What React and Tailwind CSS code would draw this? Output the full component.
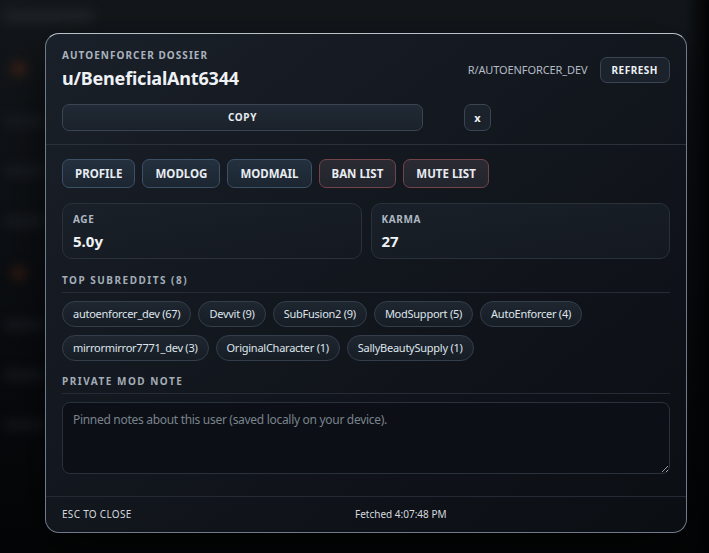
import React from "react";

const font = { fontFamily: '"Noto Sans", "Open Sans", sans-serif' };

function NavBtn({ children, danger }) {
  return (
    <button
      className={
        danger
          ? "h-[29px] px-[12px] rounded-[7px] border border-[#74434a] bg-gradient-to-b from-[#2b2a33] to-[#22252d] text-[11.5px] font-bold text-[#e8ecf1]"
          : "h-[29px] px-[12px] rounded-[7px] border border-[#3c5068] bg-gradient-to-b from-[#23303e] to-[#1c2631] text-[11.5px] font-bold text-[#e8ecf1]"
      }
    >
      {children}
    </button>
  );
}

function Chip({ children }) {
  return (
    <span className="h-[26px] px-[10px] inline-flex items-center rounded-full border border-[#343e4a] bg-gradient-to-b from-[#1e2630] to-[#171d25] text-[11px] tracking-[-0.25px] text-[#dfe5eb]">
      {children}
    </span>
  );
}

function Stat({ label, value }) {
  return (
    <div className="h-[56px] rounded-[10px] border border-[#29313b] bg-gradient-to-br from-[#1a2029] to-[#141920] px-[10px] pt-[8px]">
      <div className="text-[10px] font-bold tracking-[0.6px] text-[#aeb8c3] leading-[14px]">{label}</div>
      <div className="text-[15px] font-bold text-[#f0f3f6] leading-[20px] mt-[5px]">{value}</div>
    </div>
  );
}

function SectionTitle({ children }) {
  return (
    <div className="text-[10px] font-bold tracking-[1.5px] text-[#a3adb8] leading-[14px] pb-[5px] border-b border-[#252c35]">
      {children}
    </div>
  );
}

export default function App() {
  const subs = [
    "autoenforcer_dev (67)",
    "Devvit (9)",
    "SubFusion2 (9)",
    "ModSupport (5)",
    "AutoEnforcer (4)",
    "mirrormirror7771_dev (3)",
    "OriginalCharacter (1)",
    "SallyBeautySupply (1)",
  ];
  return (
    <div
      style={font}
      className="relative w-[709px] h-[553px] overflow-hidden bg-gradient-to-b from-[#13171b] via-[#0b0e12] to-[#040506]"
    >
      {/* blurred background page */}
      <div className="absolute inset-0 blur-[6px] opacity-70 pointer-events-none">
        <div className="flex flex-col gap-[40px] pl-[4px] pt-[10px]">
          <div className="w-[90px] h-[12px] rounded bg-[#262a30]" />
          <div className="w-[14px] h-[14px] ml-[8px] rounded-full bg-[#5a2a14]" />
          <div className="w-[40px] h-[10px] rounded bg-[#1e2329]" />
          <div className="w-[40px] h-[10px] rounded bg-[#1e2329]" />
          <div className="w-[40px] h-[10px] rounded bg-[#1e2329]" />
          <div className="w-[14px] h-[14px] ml-[8px] rounded-full bg-[#4e2412]" />
          <div className="w-[40px] h-[10px] rounded bg-[#1c2026]" />
          <div className="w-[40px] h-[10px] rounded bg-[#1c2026]" />
          <div className="w-[40px] h-[10px] rounded bg-[#1a1e24]" />
        </div>
      </div>
      <div className="absolute right-0 top-0 w-[24px] h-full bg-gradient-to-r from-transparent to-[#020304]" />

      <div className="relative pt-[33px] pl-[45px]">
        <div className="w-[642px] h-[500px] rounded-[14px] border border-[#6f7b8a] border-t-[#b9c1ca] bg-gradient-to-br from-[#1a2029] via-[#12161d] to-[#0b0e13] shadow-[0_20px_50px_rgba(0,0,0,0.6)] flex flex-col overflow-hidden">
          {/* header */}
          <div className="px-[16px] pt-[14px] pb-[13px] border-b border-[#2a313b] grid grid-cols-[361px_1fr] gap-x-[40px] gap-y-[14px] items-center">
            <div>
              <div className="text-[10px] font-bold tracking-[1.05px] text-[#a9b3be] leading-[14px]">
                AUTOENFORCER DOSSIER
              </div>
              <div className="text-[18px] font-bold tracking-[-0.2px] text-[#eef1f5] leading-[24px] mt-[4px]">
                u/BeneficialAnt6344
              </div>
            </div>
            <div className="flex items-center justify-end gap-[12px] pt-[2px]">
              <span className="text-[11px] text-[#b4bcc5] tracking-[-0.1px]">R/AUTOENFORCER_DEV</span>
              <button className="h-[26px] px-[11px] rounded-[7px] border border-[#3a4553] bg-[#1b222b] text-[10px] font-bold tracking-[0.5px] text-[#eef1f5]">
                REFRESH
              </button>
            </div>
            <button className="h-[27px] rounded-[7px] border border-[#3a4553] bg-gradient-to-b from-[#212a35] to-[#1a212a] text-[10px] font-bold tracking-[0.6px] text-[#e6eaef]">
              COPY
            </button>
            <div className="pl-[1px]">
              <button className="w-[27px] h-[27px] rounded-[7px] border border-[#3a4553] bg-[#1b222b] text-[11px] font-bold text-[#eef1f5] leading-none">
                x
              </button>
            </div>
          </div>

          {/* body */}
          <div className="flex-1 px-[16px] pt-[14px] flex flex-col">
            <div className="flex gap-[7px]">
              <NavBtn>PROFILE</NavBtn>
              <NavBtn>MODLOG</NavBtn>
              <NavBtn>MODMAIL</NavBtn>
              <NavBtn danger>BAN LIST</NavBtn>
              <NavBtn danger>MUTE LIST</NavBtn>
            </div>
            <div className="grid grid-cols-2 gap-[9px] mt-[15px]">
              <Stat label="AGE" value="5.0y" />
              <Stat label="KARMA" value="27" />
            </div>
            <div className="mt-[14px]">
              <SectionTitle>TOP SUBREDDITS (8)</SectionTitle>
            </div>
            <div className="flex flex-wrap gap-x-[7px] gap-y-[8px] mt-[8px]">
              {subs.map((s) => (
                <Chip key={s}>{s}</Chip>
              ))}
            </div>
            <div className="mt-[13px]">
              <SectionTitle>PRIVATE MOD NOTE</SectionTitle>
            </div>
            <textarea
              className="mt-[8px] h-[72px] w-full rounded-[8px] border border-[#29313b] bg-[#0c1016] px-[10px] py-[8px] text-[12px] tracking-[-0.3px] text-[#d0d6dc] placeholder:text-[#7a838d] outline-none"
              placeholder="Pinned notes about this user (saved locally on your device)."
            />
          </div>

          {/* footer */}
          <div className="h-[36px] border-t border-[#232a33] px-[16px] flex items-center justify-between text-[10px] text-[#d3d9df]">
            <span className="tracking-[0.3px]">ESC TO CLOSE</span>
            <span>Fetched 4:07:48 PM</span>
            <span></span>
          </div>
        </div>
      </div>
    </div>
  );
}
